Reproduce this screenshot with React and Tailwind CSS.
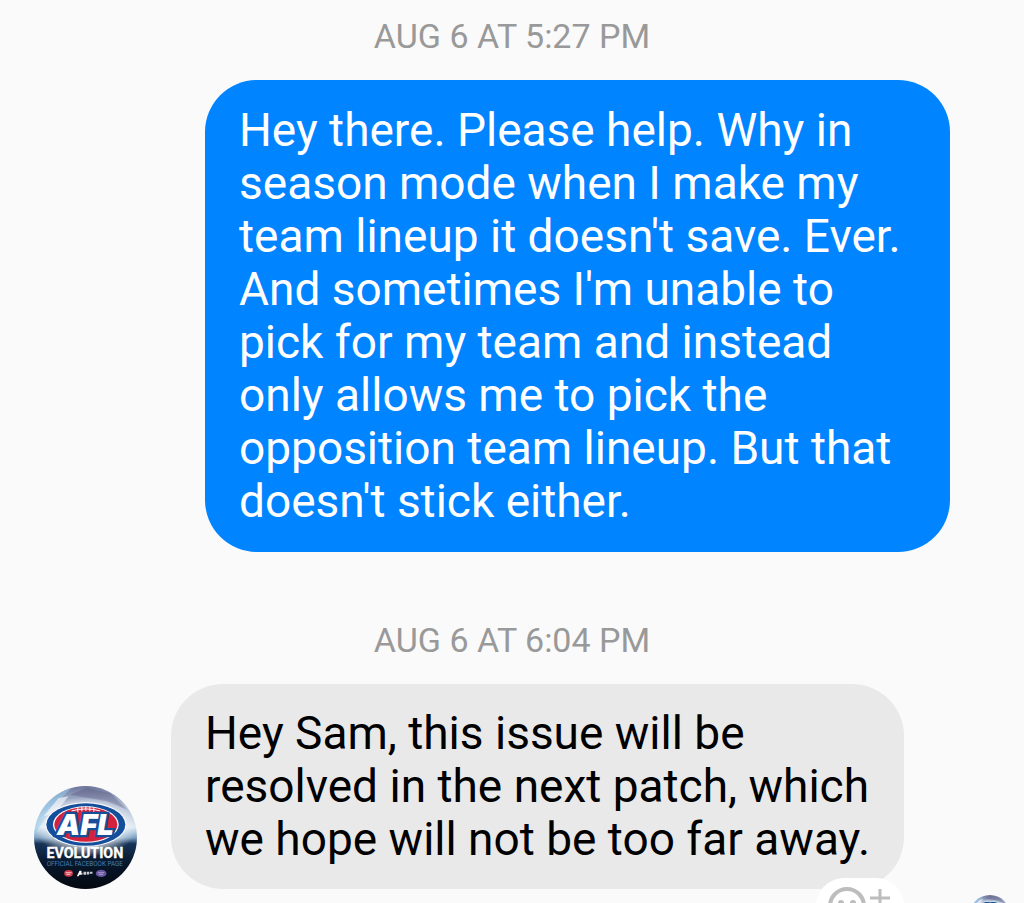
import { useId } from 'react';

const messages = [
  {
    id: 1,
    time: 'Aug 6 at 5:27 PM',
    mine: true,
    text: "Hey there. Please help. Why in season mode when I make my team lineup it doesn't save. Ever. And sometimes I'm unable to pick for my team and instead only allows me to pick the opposition team lineup. But that doesn't stick either.",
  },
  {
    id: 2,
    time: 'Aug 6 at 6:04 PM',
    mine: false,
    text: 'Hey Sam, this issue will be resolved in the next patch, which we hope will not be too far away.',
  },
];

function Wordmark() {
  return (
    <>
      <g fontFamily="Inter, sans-serif" fontSize="88" fontWeight="900" fontStyle="italic" textAnchor="middle">
        <text x="166" y="166" fill="#fff" stroke="#154f9c" strokeWidth="14" paintOrder="stroke">AFL</text>
      </g>
      <g fontFamily="Roboto, sans-serif" textAnchor="middle">
        <text x="164" y="236" fontSize="43" fontWeight="700" fill="#fff" stroke="#fff" strokeWidth="1">EVOLUTION</text>
        <text x="164" y="261" fontSize="19" fill="#4a7eae">OFFICIAL FACEBOOK PAGE</text>
      </g>
      <ellipse cx="115" cy="282" rx="13" ry="10" fill="#d03a4c" />
      <path d="M106 280h18M109 285h11" stroke="#f4c8cd" strokeWidth="3" />
      <path d="M140 291l8-17h6v8h6l-6 4h-6l-3 5z" fill="#fff" />
      <path d="M160 277h8v9h-8zM170 277h7v8h-7zM179 277h8v6h-8z" fill="#c8ccd4" />
      <ellipse cx="213" cy="282" rx="16" ry="11" fill="#67559f" />
      <path d="M203 280h19M206 285h13" stroke="#a99bd0" strokeWidth="3" />
    </>
  );
}

function Avatar({ className, compact }) {
  const id = useId();

  return (
    <svg className={className} viewBox="11 19 310 310" role="img" aria-label="AFL Evolution">
      <defs>
        <clipPath id={`${id}clip`}>
          <circle cx="166" cy="174" r="155" />
        </clipPath>
        <linearGradient id={`${id}sky`} x1="0" y1="0" x2="0" y2="1">
          <stop offset="0" stopColor="#6c7399" />
          <stop offset="0.16" stopColor="#a9b6d0" />
          <stop offset="0.4" stopColor="#dce8f2" />
          <stop offset="0.5" stopColor="#7fa3c4" />
          <stop offset="0.56" stopColor="#173458" />
          <stop offset="0.75" stopColor="#07172c" />
          <stop offset="1" stopColor="#04080f" />
        </linearGradient>
        <radialGradient id={`${id}glow`}>
          <stop offset="0.5" stopColor="#fff" stopOpacity="0.95" />
          <stop offset="1" stopColor="#fff" stopOpacity="0" />
        </radialGradient>
      </defs>
      <g clipPath={`url(#${id}clip)`}>
        <rect x="11" y="19" width="310" height="310" fill={`url(#${id}sky)`} />
        <path d="M11 70L90 19h40L60 90l-49 80z" fill="#8fc6e8" opacity="0.6" />
        <path d="M120 45l50-20 70 15 50 50-60-25z" fill="#4d4a70" opacity="0.3" />
        <path d="M40 110l45-55 30-5-40 50z" fill="#fff" opacity="0.6" />
        <ellipse cx="167" cy="142" rx="155" ry="90" fill={`url(#${id}glow)`} />
        <ellipse cx="167" cy="135" rx="122" ry="67" fill="#fff" />
        <ellipse cx="167" cy="135" rx="119" ry="64" fill="#154f9c" />
        <ellipse cx="167" cy="135" rx="99" ry="55" fill="#fff" />
        <ellipse cx="167" cy="135" rx="95" ry="52" fill="#d4223c" />
        <path d="M124 94q43-12 86 0M143 84v14M155 81v14M167 80v14M179 81v14M191 84v14" fill="none" stroke="#fff" strokeWidth="3" />
        {!compact && <Wordmark />}
      </g>
    </svg>
  );
}

function ReactButton() {
  return (
    <button
      type="button"
      aria-label="Add reaction"
      className="absolute top-[194px] right-0 w-[88px] h-14 rounded-full bg-white flex justify-center pt-2"
    >
      <svg className="w-16 h-10" viewBox="0 0 64 40" fill="none" stroke="#bdbdbd" strokeWidth="4">
        <circle cx="19" cy="20" r="17" />
        <path d="M52 3v19M42 12h20" strokeWidth="3" />
        <circle cx="13" cy="17" r="3" fill="#bdbdbd" stroke="none" />
        <circle cx="25" cy="17" r="3" fill="#bdbdbd" stroke="none" />
        <path d="M11 24q8 9 16 0" strokeWidth="3" />
      </svg>
    </button>
  );
}

function Timestamp({ children }) {
  return <time className="block text-center uppercase text-[34px] leading-10 text-[#999999]">{children}</time>;
}

function Message({ message }) {
  if (message.mine) {
    return (
      <div className="pl-[205px] pr-[74px]">
        <p className="rounded-[52px] bg-[#0084ff] text-white px-[34px] py-6 text-[46px] leading-[53px]">{message.text}</p>
      </div>
    );
  }

  return (
    <div className="flex items-end pl-[34px] pr-[120px]">
      <Avatar className="w-[103px] h-[103px] shrink-0 mr-[34px]" />
      <div className="relative flex-1">
        <p className="rounded-[52px] bg-[#e9e9e9] text-black pl-[34px] pr-6 py-[23px] text-[46px] leading-[53px]">{message.text}</p>
        <ReactButton />
      </div>
    </div>
  );
}

export default function App() {
  return (
    <main className="h-screen overflow-hidden bg-[#fafafa] pt-4 font-[Roboto,sans-serif]">
      <div className="flex flex-col gap-[68px]">
        {messages.map(message => (
          <section key={message.id} className="flex flex-col gap-6">
            <Timestamp>{message.time}</Timestamp>
            <Message message={message} />
          </section>
        ))}
      </div>
      <div className="flex justify-end pt-[6px] pr-[14px]">
        <Avatar className="w-10 h-10" compact />
      </div>
    </main>
  );
}
